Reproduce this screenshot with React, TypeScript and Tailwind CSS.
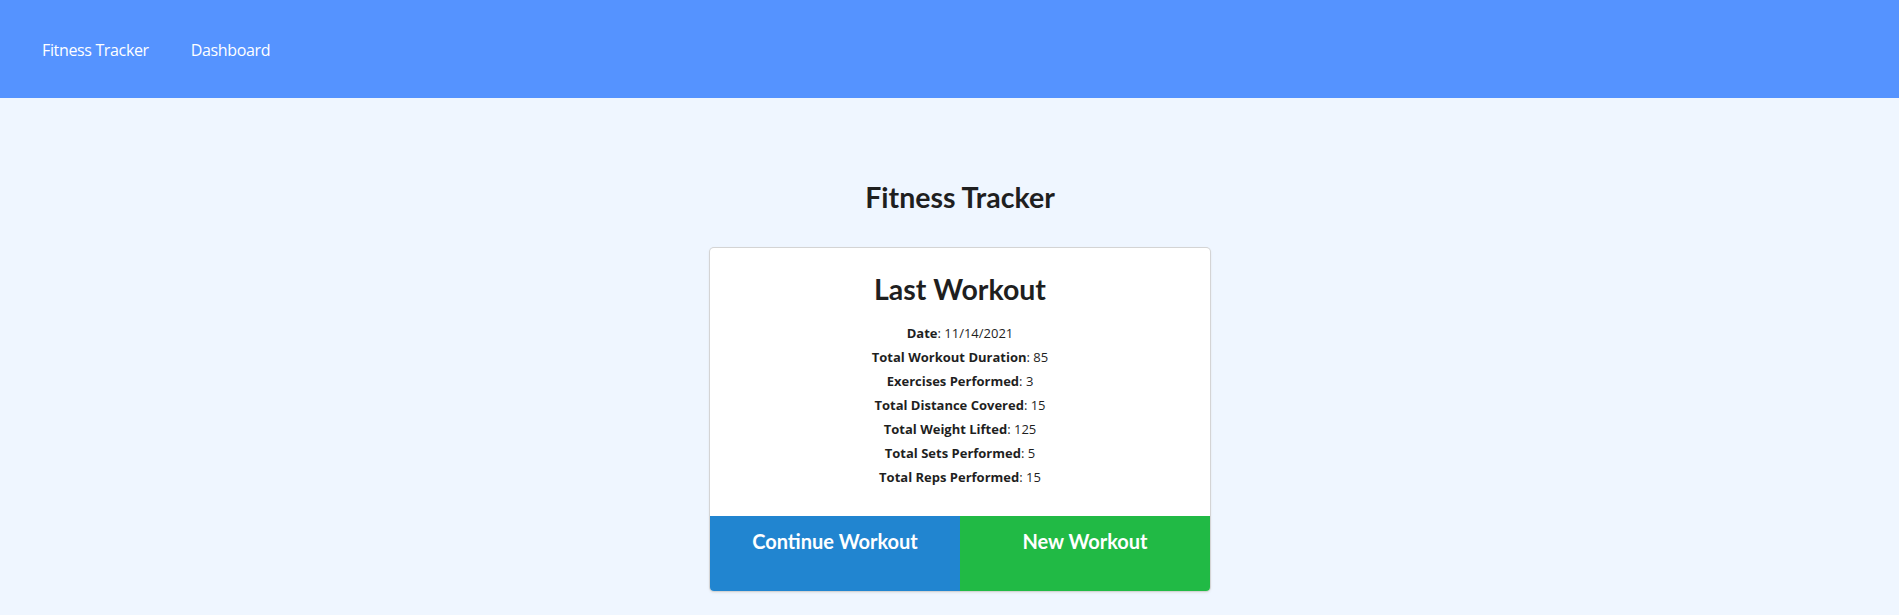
import React from 'react';

const stats = [
  { label: 'Date', value: '11/14/2021' },
  { label: 'Total Workout Duration', value: '85' },
  { label: 'Exercises Performed', value: '3' },
  { label: 'Total Distance Covered', value: '15' },
  { label: 'Total Weight Lifted', value: '125' },
  { label: 'Total Sets Performed', value: '5' },
  { label: 'Total Reps Performed', value: '15' },
];

const App = () => {
  return (
    <div className="min-h-screen bg-[#eff6ff] font-['Open_Sans',sans-serif]">
      <nav className="h-[98px] bg-[#5593ff] flex items-center px-[42px] pt-[2px] gap-[42px] text-white text-[16px] tracking-[-0.35px]">
        <a href="#">Fitness Tracker</a>
        <a href="#">Dashboard</a>
      </nav>

      <main className="flex flex-col items-center pt-[82px] pl-[21px]">
        <h1 className="font-['Lato',sans-serif] font-bold text-[28.5px] leading-[1.2] text-[#1f1f1f]">
          Fitness Tracker
        </h1>

        <div className="mt-[34px] w-[500px] bg-white rounded-[4px] shadow-[0_1px_3px_0_#d4d4d5,0_0_0_1px_#d4d4d5] overflow-hidden">
          <div className="pt-[24px] pb-[27px] text-center text-[#1f1f1f]">
            <h2 className="font-['Lato',sans-serif] font-bold text-[28.5px] leading-[1.2]">Last Workout</h2>
            <div className="mt-[15px] text-[13px] leading-[24px]">
              {stats.map((s) => (
                <div key={s.label}>
                  <span className="font-bold">{s.label}</span>: {s.value}
                </div>
              ))}
            </div>
          </div>
          <div className="grid grid-cols-2 h-[75px] font-['Lato',sans-serif] font-bold text-[20px] text-white">
            <button className="bg-[#2185d0] pt-[10px] flex justify-center items-start">Continue Workout</button>
            <button className="bg-[#21ba45] pt-[10px] flex justify-center items-start">New Workout</button>
          </div>
        </div>
      </main>
    </div>
  );
};

export default App;
